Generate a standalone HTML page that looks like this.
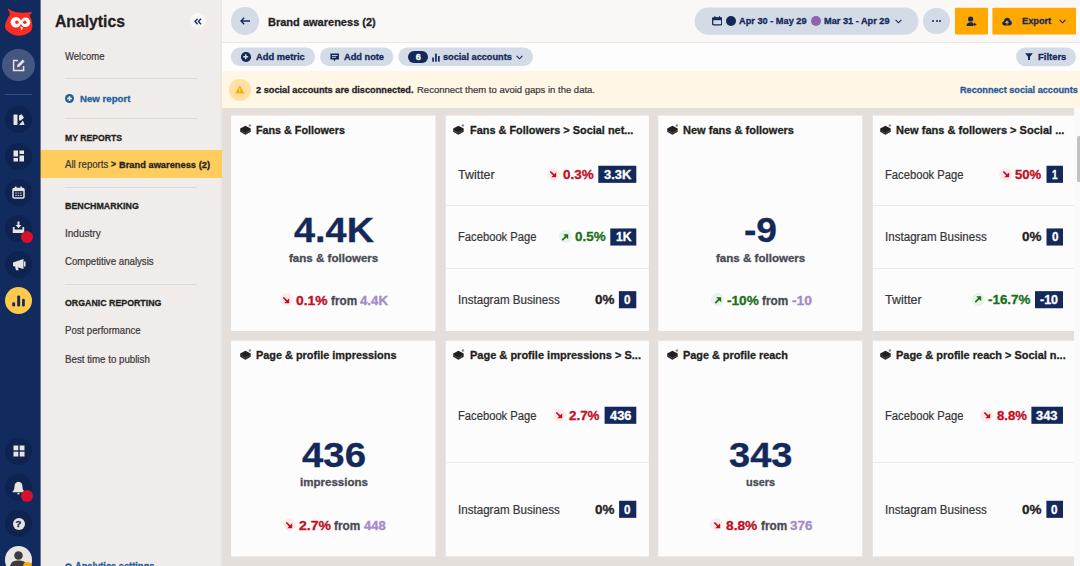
<!DOCTYPE html><html><head><meta charset="utf-8"><title>Analytics</title><style>
html,body{margin:0;padding:0}body{width:1080px;height:566px;overflow:hidden;position:relative;background:#e4dfdb;font-family:"Liberation Sans", sans-serif}
#r{position:absolute;left:0;top:0;width:1080px;height:566px;overflow:hidden}
#r div,#r svg,#r span{position:absolute;display:block}
#r span{white-space:pre;line-height:1}
</style></head><body><div id="r">
<div style="left:0.00px;top:0.00px;width:40.00px;height:566.00px;background:#112b5e;"></div>
<div style="left:40.00px;top:0.00px;width:182.00px;height:566.00px;background:#f0ece9;"></div>
<div style="left:40.00px;top:0.00px;width:1.00px;height:566.00px;background:#6a7896;"></div>
<div style="left:220.00px;top:0.00px;width:1.00px;height:566.00px;background:#eeeae7;"></div>
<div style="left:221.00px;top:0.00px;width:1.00px;height:566.00px;background:#e9e5e2;"></div>
<div style="left:222.00px;top:0.00px;width:858.00px;height:42.00px;background:#f9f8f7;"></div>
<div style="left:222.00px;top:42.00px;width:858.00px;height:1.00px;background:#ebe7e4;"></div>
<div style="left:222.00px;top:43.00px;width:858.00px;height:28.00px;background:#fdfdfd;"></div>
<div style="left:222.00px;top:71.00px;width:858.00px;height:37.00px;background:#fff6e5;"></div>
<div style="left:222.00px;top:108.00px;width:858.00px;height:458.00px;background:#e4dfdb;"></div>
<svg style="left:4.00px;top:7.00px;" width="30" height="30" viewBox="0 0 30 30"><path d="M3.5 1.2 C6 3 10 5 14.8 5.5 C18 5.8 23 5.6 28.4 4.9 C27 6.5 26 7.8 25.5 8.7 C27.5 11 28.4 16 28.4 20 C28 23 26.5 25 24.9 25.6 C22 28 18 28.8 14.8 28.8 C11 28.8 7.5 27.5 5.4 25.6 C3 24 1.2 22 1 20 C1 17 1.8 15 2.9 13 C3.8 11 5 8.8 6 7.4 C5.5 5.5 4.8 3.4 3.5 1.2 Z" fill="#fb2c23"/>
<circle cx="11.9" cy="15.3" r="5.3" fill="#fff"/><circle cx="21.5" cy="15.3" r="4.8" fill="#fff"/>
<circle cx="12.9" cy="15.3" r="1.8" fill="#fb2c23"/><circle cx="20.8" cy="15.3" r="1.8" fill="#fb2c23"/>
<path d="M16.2 19.6 L19 20.6 L17.6 23.4 Z" fill="#fff"/></svg>
<div style="left:2.25px;top:48.75px;width:32.50px;height:32.50px;background:#43577f;border-radius:50%;"></div>
<svg style="left:11.50px;top:58.00px;" width="14" height="14" viewBox="0 0 14 14"><path d="M6 2.4 H1.6 V12.4 H11.6 V8" fill="none" stroke="#e6e2df" stroke-width="1.5"/><path d="M5.4 6.8 L10.6 1.5 L12.6 3.5 L7.4 8.8 L5 9.3 Z" fill="#e6e2df"/></svg>
<div style="left:5.00px;top:94.00px;width:27.00px;height:1.00px;background:#3a4f7c;"></div>
<div style="left:5.00px;top:106.30px;width:27.00px;height:27.00px;background:#0e2350;border-radius:50%;"></div>
<div style="left:5.00px;top:142.50px;width:27.00px;height:27.00px;background:#0e2350;border-radius:50%;"></div>
<div style="left:5.00px;top:178.90px;width:27.00px;height:27.00px;background:#0e2350;border-radius:50%;"></div>
<div style="left:5.00px;top:215.00px;width:27.00px;height:27.00px;background:#0e2350;border-radius:50%;"></div>
<div style="left:5.00px;top:251.10px;width:27.00px;height:27.00px;background:#0e2350;border-radius:50%;"></div>
<div style="left:5.00px;top:287.20px;width:27.00px;height:27.00px;background:#ffc94d;border-radius:50%;"></div>
<div style="left:5.00px;top:437.50px;width:27.00px;height:27.00px;background:#0e2350;border-radius:50%;"></div>
<div style="left:5.00px;top:474.00px;width:27.00px;height:27.00px;background:#0e2350;border-radius:50%;"></div>
<div style="left:5.00px;top:510.00px;width:27.00px;height:27.00px;background:#0e2350;border-radius:50%;"></div>
<svg style="left:12.50px;top:113.80px;" width="12" height="12" viewBox="0 0 12 12"><rect x="0.5" y="0.5" width="4" height="10.5" rx="0.8" fill="#e8e4e1"/><path d="M6 1.6 L8.6 0.3 L11 3.8 L7.8 6.4 H6 Z" fill="#e8e4e1"/><path d="M6 11 L10 6.6 L11.6 11 Z" fill="#e8e4e1"/></svg>
<svg style="left:12.50px;top:150.00px;" width="12" height="12" viewBox="0 0 12 12"><rect x="0.5" y="0.5" width="4.5" height="6" fill="#e8e4e1"/><rect x="6.5" y="0.5" width="4.5" height="3.5" fill="#e8e4e1"/><rect x="0.5" y="8" width="4.5" height="3.5" fill="#e8e4e1"/><rect x="6.5" y="5.5" width="4.5" height="6" fill="#e8e4e1"/></svg>
<svg style="left:12.00px;top:186.00px;" width="13" height="13" viewBox="0 0 13 13"><rect x="1" y="2.5" width="11" height="9.5" rx="1.2" fill="none" stroke="#e8e4e1" stroke-width="1.5"/><rect x="1" y="2.5" width="11" height="2.6" fill="#e8e4e1"/><rect x="3" y="0.5" width="1.6" height="3" fill="#e8e4e1"/><rect x="8.4" y="0.5" width="1.6" height="3" fill="#e8e4e1"/><path d="M3.2 7 H4.8 M5.7 7 H7.3 M8.2 7 H9.8 M3.2 9.3 H4.8 M5.7 9.3 H7.3 M8.2 9.3 H9.8" stroke="#e8e4e1" stroke-width="1.2" opacity="0.8"/></svg>
<svg style="left:12.00px;top:221.30px;" width="13" height="13" viewBox="0 0 13 13"><path d="M5.5 0.5 H7.5 V4 H9.5 L6.5 7.2 L3.5 4 H5.5 Z" fill="#e8e4e1"/><path d="M0.8 6 H2.6 V8.6 H10.4 V6 H12.2 V12 H0.8 Z" fill="#e8e4e1"/></svg>
<div style="left:21.30px;top:231.00px;width:12.00px;height:12.00px;background:#d8102c;border-radius:50%;"></div>
<svg style="left:11.50px;top:258.00px;" width="14" height="13" viewBox="0 0 14 13"><path d="M1 4.5 L11.5 1 V11 L1 8 Z" fill="#e8e4e1"/><rect x="12" y="3.5" width="1.5" height="5" fill="#e8e4e1"/><path d="M3 8.5 L6 9.3 L6.5 12.3 H4 Z" fill="#e8e4e1"/></svg>
<svg style="left:12.00px;top:295.00px;" width="13" height="12" viewBox="0 0 13 12"><rect x="0.3" y="7.3" width="2.8" height="4.1" rx="1.2" fill="#14295a"/><rect x="5.2" y="0.4" width="2.9" height="11" rx="1.2" fill="#14295a"/><rect x="10.1" y="3.7" width="2.7" height="7.7" rx="1.2" fill="#14295a"/></svg>
<svg style="left:12.50px;top:445.00px;" width="12" height="12" viewBox="0 0 12 12"><rect x="0.5" y="0.5" width="4.8" height="4.8" fill="#e8e4e1"/><rect x="6.7" y="0.5" width="4.8" height="4.8" fill="#e8e4e1"/><rect x="0.5" y="6.7" width="4.8" height="4.8" fill="#e8e4e1"/><rect x="6.7" y="6.7" width="4.8" height="4.8" fill="#e8e4e1"/></svg>
<svg style="left:12.00px;top:480.50px;" width="13" height="14" viewBox="0 0 13 14"><path d="M6.5 0.8 C9.3 0.8 10.5 3 10.5 5.5 C10.5 8.5 11.5 9.5 12.3 10.3 V11.2 H0.7 V10.3 C1.5 9.5 2.5 8.5 2.5 5.5 C2.5 3 3.7 0.8 6.5 0.8 Z" fill="#e8e4e1"/><rect x="5.5" y="11.8" width="2" height="1.6" fill="#e8e4e1"/></svg>
<div style="left:21.20px;top:490.00px;width:12.00px;height:12.00px;background:#d8102c;border-radius:50%;"></div>
<div style="left:12.50px;top:517.50px;width:12.00px;height:12.00px;background:#e8e4e1;border-radius:50%;"></div>
<div style="left:4.75px;top:546.25px;width:27.50px;height:27.50px;background:#e9e6e3;border-radius:50%;"></div>
<svg style="left:9.00px;top:549.00px;" width="19" height="19" viewBox="0 0 19 19"><circle cx="9.5" cy="6.5" r="4.3" fill="#3c3c3c"/><path d="M1 19 C1 13 5 11.5 9.5 11.5 C14 11.5 18 13 18 19 Z" fill="#3c3c3c"/></svg>
<div style="left:22.90px;top:561.50px;width:9.00px;height:9.00px;background:#ffa800;border-radius:50%;"></div>
<div style="left:190.20px;top:13.00px;width:16.00px;height:16.00px;background:#f8f7f6;border-radius:50%;"></div>
<svg style="left:194.30px;top:17.70px;" width="8" height="7" viewBox="0 0 8 7"><path d="M3.6 0.8 L1 3.5 L3.6 6.2 M7 0.8 L4.4 3.5 L7 6.2" fill="none" stroke="#14295a" stroke-width="1.3"/></svg>
<div style="left:65.00px;top:78.20px;width:132.00px;height:1.00px;background:#dedad6;"></div>
<div style="left:65.00px;top:117.70px;width:132.00px;height:1.00px;background:#dedad6;"></div>
<div style="left:65.00px;top:186.60px;width:132.00px;height:1.00px;background:#dedad6;"></div>
<div style="left:65.00px;top:283.80px;width:132.00px;height:1.00px;background:#dedad6;"></div>
<div style="left:64.70px;top:93.50px;width:9.60px;height:9.60px;background:#1f5f9e;border-radius:50%;"></div>
<svg style="left:65.00px;top:93.80px;" width="9" height="9" viewBox="0 0 9 9"><path d="M4.5 2 V7 M2 4.5 H7" stroke="#f0ece9" stroke-width="1.5"/></svg>
<div style="left:41.00px;top:150.40px;width:181.00px;height:27.90px;background:#ffcd5d;"></div>
<div style="left:40.00px;top:150.40px;width:1.00px;height:27.90px;background:#70784f;"></div>
<svg style="left:64.50px;top:562.50px;" width="7" height="7" viewBox="0 0 7 7"><circle cx="3.5" cy="3.5" r="2.4" fill="none" stroke="#1f5f9e" stroke-width="1.8"/></svg>
<div style="left:231.05px;top:7.25px;width:27.50px;height:27.50px;background:#d4dbe6;border-radius:50%;"></div>
<svg style="left:239.50px;top:17.00px;" width="11" height="8" viewBox="0 0 11 8"><path d="M4.2 0.8 L1 4 L4.2 7.2 M1.2 4 H10" fill="none" stroke="#14295a" stroke-width="1.3"/></svg>
<svg style="left:693.00px;top:6.00px;" width="227" height="31" viewBox="0 0 227 31"><rect x="1.60" y="1.40" width="223.90" height="27.40" fill="#d3dbe6" rx="13.7"/></svg>
<svg style="left:711.80px;top:16.40px;" width="10.5" height="9.6" viewBox="0 0 10.5 9.6"><rect x="0.7" y="1.8" width="9" height="7" rx="0.8" fill="none" stroke="#14295a" stroke-width="1.3"/><rect x="0.7" y="1.8" width="9" height="2.4" fill="#14295a"/><rect x="2.3" y="0.2" width="1.3" height="2.4" fill="#14295a"/><rect x="6.8" y="0.2" width="1.3" height="2.4" fill="#14295a"/></svg>
<div style="left:726.30px;top:16.20px;width:10.00px;height:10.00px;background:#14295a;border-radius:50%;"></div>
<div style="left:811.20px;top:16.20px;width:10.00px;height:10.00px;background:#8f63ad;border-radius:50%;"></div>
<svg style="left:895.40px;top:18.50px;" width="7" height="5" viewBox="0 0 7 5"><path d="M0.6 0.8 L3.5 3.8 L6.4 0.8" fill="none" stroke="#14295a" stroke-width="1.1"/></svg>
<div style="left:923.45px;top:7.75px;width:26.50px;height:26.50px;background:#d3dbe6;border-radius:50%;"></div>
<div style="left:932.35px;top:20.25px;width:2.10px;height:2.10px;background:#14295a;border-radius:50%;"></div>
<div style="left:935.65px;top:20.25px;width:2.10px;height:2.10px;background:#14295a;border-radius:50%;"></div>
<div style="left:938.95px;top:20.25px;width:2.10px;height:2.10px;background:#14295a;border-radius:50%;"></div>
<svg style="left:954.00px;top:6.00px;" width="36" height="30" viewBox="0 0 36 30"><rect x="1.00" y="1.70" width="33.00" height="26.80" fill="#ffa800" rx="1.2"/></svg>
<svg style="left:966.00px;top:15.50px;" width="11" height="11" viewBox="0 0 11 11"><circle cx="4.6" cy="3" r="2.6" fill="#14295a"/><path d="M0.5 10 C0.6 7.6 2 6.3 4.6 6.3 C6 6.3 6.9 6.6 7.4 7.2 V10 Z" fill="#14295a"/><path d="M8.8 6.8 V10 M7.2 8.4 H10.4" stroke="#14295a" stroke-width="1"/></svg>
<svg style="left:991.00px;top:6.00px;" width="87" height="30" viewBox="0 0 87 30"><rect x="1.40" y="1.70" width="83.60" height="26.80" fill="#ffa800" rx="1.2"/></svg>
<svg style="left:1002.30px;top:16.50px;" width="10" height="9" viewBox="0 0 10 9"><path d="M2.5 8.5 C1 8.5 0.2 7.4 0.2 6.3 C0.2 5.2 1 4.3 2 4.2 C2.2 2.2 3.5 0.8 5.2 0.8 C6.8 0.8 8 2 8.2 3.6 C9.2 3.8 9.9 4.8 9.9 6 C9.9 7.4 8.9 8.5 7.6 8.5 Z" fill="#14295a"/><path d="M5 7.6 V4.4 M3.4 5.8 L5 4.2 L6.6 5.8" fill="none" stroke="#ffa800" stroke-width="1.1"/></svg>
<svg style="left:1059.00px;top:18.50px;" width="7" height="5" viewBox="0 0 7 5"><path d="M0.6 0.8 L3.5 3.8 L6.4 0.8" fill="none" stroke="#14295a" stroke-width="1.1"/></svg>
<svg style="left:229.00px;top:46.00px;" width="88" height="22" viewBox="0 0 88 22"><rect x="1.80" y="1.60" width="84.20" height="18.30" fill="#d3dbe6" rx="9.15"/></svg>
<div style="left:241.30px;top:52.30px;width:9.40px;height:9.40px;background:#14295a;border-radius:50%;"></div>
<svg style="left:241.30px;top:52.30px;" width="9.4" height="9.4" viewBox="0 0 9.4 9.4"><path d="M4.7 2.2 V7.2 M2.2 4.7 H7.2" stroke="#d3dbe6" stroke-width="1.5"/></svg>
<svg style="left:319.00px;top:46.00px;" width="77" height="22" viewBox="0 0 77 22"><rect x="1.00" y="1.60" width="73.30" height="18.30" fill="#d3dbe6" rx="9.15"/></svg>
<svg style="left:329.60px;top:52.60px;" width="9.6" height="9.4" viewBox="0 0 9.6 9.4"><path d="M0.4 0.4 H9.2 V6.6 H5.6 L4.2 8.6 L3.6 6.6 H0.4 Z" fill="#14295a"/><path d="M2 2.5 H7.6 M2 4.3 H6" stroke="#d3dbe6" stroke-width="0.9"/></svg>
<svg style="left:397.00px;top:46.00px;" width="138" height="22" viewBox="0 0 138 22"><rect x="1.30" y="1.60" width="134.70" height="18.30" fill="#d3dbe6" rx="9.15"/></svg>
<div style="left:408.30px;top:51.30px;width:19.70px;height:11.70px;background:#14295a;border-radius:5.9px;"></div>
<svg style="left:431.60px;top:52.50px;" width="8" height="9" viewBox="0 0 8 9"><rect x="0.2" y="4.5" width="1.7" height="4.2" fill="#14295a"/><rect x="3.1" y="0.6" width="1.7" height="8.1" fill="#14295a"/><rect x="6" y="3" width="1.7" height="5.7" fill="#14295a"/></svg>
<svg style="left:516.40px;top:54.60px;" width="7" height="5" viewBox="0 0 7 5"><path d="M0.6 0.8 L3.5 3.8 L6.4 0.8" fill="none" stroke="#14295a" stroke-width="1.1"/></svg>
<svg style="left:1015.00px;top:46.00px;" width="63" height="22" viewBox="0 0 63 22"><rect x="1.10" y="1.40" width="59.90" height="18.80" fill="#d3dbe6" rx="9.4"/></svg>
<svg style="left:1024.60px;top:53.40px;" width="8" height="7.4" viewBox="0 0 8 7.4"><path d="M0.1 0.3 H7.9 L5 3.7 V7 H3 V3.7 Z" fill="#14295a"/></svg>
<div style="left:229.00px;top:79.00px;width:22.00px;height:22.00px;background:#ffe0a0;border-radius:50%;"></div>
<svg style="left:235.20px;top:85.00px;" width="9.6" height="8.8" viewBox="0 0 9.6 8.8"><path d="M4.8 0.4 L9.4 8.6 H0.2 Z" fill="#ffa800"/><path d="M4.8 3.4 V6 M4.8 6.8 V7.6" stroke="#ffe9bd" stroke-width="0.9"/></svg>
<svg style="left:230.00px;top:114.00px;" width="208" height="219" viewBox="0 0 208 219"><rect x="1.10" y="1.60" width="204.30" height="215.40" fill="#fcfcfc"/></svg>
<svg style="left:239.50px;top:124.00px;" width="12.5" height="11" viewBox="0 0 12.5 11"><path d="M0.2 4.6 L5.4 1.7 L10.7 4.6 V7.8 L5.4 10.8 L0.2 7.8 Z" fill="#231f20"/><path d="M0.6 6.4 L5.4 9 L10.3 6.4" fill="none" stroke="#77757a" stroke-width="0.5"/><path d="M0.6 7.7 L5.4 10.3 L10.3 7.7" fill="none" stroke="#55535a" stroke-width="0.4"/><circle cx="9.9" cy="1.5" r="1.2" fill="#8a888c"/></svg>
<div style="left:279.95px;top:293.30px;width:13.00px;height:13.00px;background:#fdeaed;border-radius:50%;"></div>
<svg style="left:282.25px;top:295.60px;" width="8.4" height="8.4" viewBox="0 0 8.4 8.4"><path d="M1.3 1.5 L6 6.2" stroke="#c20e1f" stroke-width="1.7"/><path d="M7.2 2.2 V7.2 H2.2 Z" fill="#c20e1f"/></svg>
<svg style="left:444.00px;top:114.00px;" width="207" height="219" viewBox="0 0 207 219"><rect x="1.70" y="1.60" width="203.20" height="215.40" fill="#fcfcfc"/></svg>
<svg style="left:453.30px;top:124.00px;" width="12.5" height="11" viewBox="0 0 12.5 11"><path d="M0.2 4.6 L5.4 1.7 L10.7 4.6 V7.8 L5.4 10.8 L0.2 7.8 Z" fill="#231f20"/><path d="M0.6 6.4 L5.4 9 L10.3 6.4" fill="none" stroke="#77757a" stroke-width="0.5"/><path d="M0.6 7.7 L5.4 10.3 L10.3 7.7" fill="none" stroke="#55535a" stroke-width="0.4"/><circle cx="9.9" cy="1.5" r="1.2" fill="#8a888c"/></svg>
<svg style="left:597.00px;top:164.00px;" width="41" height="21" viewBox="0 0 41 21"><rect x="1.30" y="1.75" width="38.00" height="17.10" fill="#14295a"/></svg>
<div style="left:546.70px;top:167.75px;width:13.00px;height:13.00px;background:#fdeaed;border-radius:50%;"></div>
<svg style="left:549.00px;top:170.05px;" width="8.4" height="8.4" viewBox="0 0 8.4 8.4"><path d="M1.3 1.5 L6 6.2" stroke="#c20e1f" stroke-width="1.7"/><path d="M7.2 2.2 V7.2 H2.2 Z" fill="#c20e1f"/></svg>
<div style="left:445.70px;top:205.30px;width:203.20px;height:1.00px;background:#eeeae7;"></div>
<svg style="left:609.00px;top:227.00px;" width="29" height="21" viewBox="0 0 29 21"><rect x="1.30" y="1.45" width="26.00" height="17.10" fill="#14295a"/></svg>
<div style="left:558.70px;top:230.45px;width:13.00px;height:13.00px;background:#e8f3ea;border-radius:50%;"></div>
<svg style="left:561.00px;top:232.75px;" width="8.4" height="8.4" viewBox="0 0 8.4 8.4"><path d="M1.3 7.1 L6 2.4" stroke="#1c701c" stroke-width="1.7"/><path d="M2.2 1.2 H7.2 V6.2 Z" fill="#1c701c"/></svg>
<div style="left:445.70px;top:268.00px;width:203.20px;height:1.00px;background:#eeeae7;"></div>
<svg style="left:617.00px;top:290.00px;" width="21" height="21" viewBox="0 0 21 21"><rect x="1.90" y="1.15" width="17.40" height="17.10" fill="#14295a"/></svg>
<svg style="left:657.00px;top:114.00px;" width="207" height="219" viewBox="0 0 207 219"><rect x="1.30" y="1.60" width="203.90" height="215.40" fill="#fcfcfc"/></svg>
<svg style="left:666.90px;top:124.00px;" width="12.5" height="11" viewBox="0 0 12.5 11"><path d="M0.2 4.6 L5.4 1.7 L10.7 4.6 V7.8 L5.4 10.8 L0.2 7.8 Z" fill="#231f20"/><path d="M0.6 6.4 L5.4 9 L10.3 6.4" fill="none" stroke="#77757a" stroke-width="0.5"/><path d="M0.6 7.7 L5.4 10.3 L10.3 7.7" fill="none" stroke="#55535a" stroke-width="0.4"/><circle cx="9.9" cy="1.5" r="1.2" fill="#8a888c"/></svg>
<div style="left:711.20px;top:293.30px;width:13.00px;height:13.00px;background:#e8f3ea;border-radius:50%;"></div>
<svg style="left:713.50px;top:295.60px;" width="8.4" height="8.4" viewBox="0 0 8.4 8.4"><path d="M1.3 7.1 L6 2.4" stroke="#1c701c" stroke-width="1.7"/><path d="M2.2 1.2 H7.2 V6.2 Z" fill="#1c701c"/></svg>
<svg style="left:871.00px;top:114.00px;" width="209" height="219" viewBox="0 0 209 219"><rect x="1.80" y="1.60" width="205.20" height="215.40" fill="#fcfcfc"/></svg>
<svg style="left:880.00px;top:124.00px;" width="12.5" height="11" viewBox="0 0 12.5 11"><path d="M0.2 4.6 L5.4 1.7 L10.7 4.6 V7.8 L5.4 10.8 L0.2 7.8 Z" fill="#231f20"/><path d="M0.6 6.4 L5.4 9 L10.3 6.4" fill="none" stroke="#77757a" stroke-width="0.5"/><path d="M0.6 7.7 L5.4 10.3 L10.3 7.7" fill="none" stroke="#55535a" stroke-width="0.4"/><circle cx="9.9" cy="1.5" r="1.2" fill="#8a888c"/></svg>
<svg style="left:1045.00px;top:164.00px;" width="20" height="21" viewBox="0 0 20 21"><rect x="1.50" y="1.75" width="16.50" height="17.10" fill="#14295a"/></svg>
<div style="left:999.20px;top:167.75px;width:13.00px;height:13.00px;background:#fdeaed;border-radius:50%;"></div>
<svg style="left:1001.50px;top:170.05px;" width="8.4" height="8.4" viewBox="0 0 8.4 8.4"><path d="M1.3 1.5 L6 6.2" stroke="#c20e1f" stroke-width="1.7"/><path d="M7.2 2.2 V7.2 H2.2 Z" fill="#c20e1f"/></svg>
<div style="left:872.80px;top:205.30px;width:205.20px;height:1.00px;background:#eeeae7;"></div>
<svg style="left:1045.00px;top:227.00px;" width="20" height="21" viewBox="0 0 20 21"><rect x="1.50" y="1.45" width="16.50" height="17.10" fill="#14295a"/></svg>
<div style="left:872.80px;top:268.00px;width:205.20px;height:1.00px;background:#eeeae7;"></div>
<svg style="left:1034.00px;top:290.00px;" width="31" height="21" viewBox="0 0 31 21"><rect x="1.00" y="1.15" width="28.00" height="17.10" fill="#14295a"/></svg>
<div style="left:971.60px;top:293.15px;width:13.00px;height:13.00px;background:#e8f3ea;border-radius:50%;"></div>
<svg style="left:973.90px;top:295.45px;" width="8.4" height="8.4" viewBox="0 0 8.4 8.4"><path d="M1.3 7.1 L6 2.4" stroke="#1c701c" stroke-width="1.7"/><path d="M2.2 1.2 H7.2 V6.2 Z" fill="#1c701c"/></svg>
<svg style="left:230.00px;top:339.00px;" width="208" height="219" viewBox="0 0 208 219"><rect x="1.10" y="1.80" width="204.30" height="215.60" fill="#fcfcfc"/></svg>
<svg style="left:239.50px;top:349.30px;" width="12.5" height="11" viewBox="0 0 12.5 11"><path d="M0.2 4.6 L5.4 1.7 L10.7 4.6 V7.8 L5.4 10.8 L0.2 7.8 Z" fill="#231f20"/><path d="M0.6 6.4 L5.4 9 L10.3 6.4" fill="none" stroke="#77757a" stroke-width="0.5"/><path d="M0.6 7.7 L5.4 10.3 L10.3 7.7" fill="none" stroke="#55535a" stroke-width="0.4"/><circle cx="9.9" cy="1.5" r="1.2" fill="#8a888c"/></svg>
<div style="left:282.85px;top:518.30px;width:13.00px;height:13.00px;background:#fdeaed;border-radius:50%;"></div>
<svg style="left:285.15px;top:520.60px;" width="8.4" height="8.4" viewBox="0 0 8.4 8.4"><path d="M1.3 1.5 L6 6.2" stroke="#c20e1f" stroke-width="1.7"/><path d="M7.2 2.2 V7.2 H2.2 Z" fill="#c20e1f"/></svg>
<svg style="left:444.00px;top:339.00px;" width="207" height="219" viewBox="0 0 207 219"><rect x="1.70" y="1.80" width="203.20" height="215.60" fill="#fcfcfc"/></svg>
<svg style="left:453.30px;top:349.30px;" width="12.5" height="11" viewBox="0 0 12.5 11"><path d="M0.2 4.6 L5.4 1.7 L10.7 4.6 V7.8 L5.4 10.8 L0.2 7.8 Z" fill="#231f20"/><path d="M0.6 6.4 L5.4 9 L10.3 6.4" fill="none" stroke="#77757a" stroke-width="0.5"/><path d="M0.6 7.7 L5.4 10.3 L10.3 7.7" fill="none" stroke="#55535a" stroke-width="0.4"/><circle cx="9.9" cy="1.5" r="1.2" fill="#8a888c"/></svg>
<svg style="left:603.00px;top:405.00px;" width="35" height="21" viewBox="0 0 35 21"><rect x="1.60" y="1.72" width="31.70" height="17.10" fill="#14295a"/></svg>
<div style="left:553.10px;top:408.72px;width:13.00px;height:13.00px;background:#fdeaed;border-radius:50%;"></div>
<svg style="left:555.40px;top:411.02px;" width="8.4" height="8.4" viewBox="0 0 8.4 8.4"><path d="M1.3 1.5 L6 6.2" stroke="#c20e1f" stroke-width="1.7"/><path d="M7.2 2.2 V7.2 H2.2 Z" fill="#c20e1f"/></svg>
<div style="left:445.70px;top:461.95px;width:203.20px;height:1.00px;background:#eeeae7;"></div>
<svg style="left:618.00px;top:499.00px;" width="21" height="21" viewBox="0 0 21 21"><rect x="1.10" y="1.77" width="17.20" height="17.10" fill="#14295a"/></svg>
<svg style="left:657.00px;top:339.00px;" width="207" height="219" viewBox="0 0 207 219"><rect x="1.30" y="1.80" width="203.90" height="215.60" fill="#fcfcfc"/></svg>
<svg style="left:666.90px;top:349.30px;" width="12.5" height="11" viewBox="0 0 12.5 11"><path d="M0.2 4.6 L5.4 1.7 L10.7 4.6 V7.8 L5.4 10.8 L0.2 7.8 Z" fill="#231f20"/><path d="M0.6 6.4 L5.4 9 L10.3 6.4" fill="none" stroke="#77757a" stroke-width="0.5"/><path d="M0.6 7.7 L5.4 10.3 L10.3 7.7" fill="none" stroke="#55535a" stroke-width="0.4"/><circle cx="9.9" cy="1.5" r="1.2" fill="#8a888c"/></svg>
<div style="left:710.20px;top:518.30px;width:13.00px;height:13.00px;background:#fdeaed;border-radius:50%;"></div>
<svg style="left:712.50px;top:520.60px;" width="8.4" height="8.4" viewBox="0 0 8.4 8.4"><path d="M1.3 1.5 L6 6.2" stroke="#c20e1f" stroke-width="1.7"/><path d="M7.2 2.2 V7.2 H2.2 Z" fill="#c20e1f"/></svg>
<svg style="left:871.00px;top:339.00px;" width="209" height="219" viewBox="0 0 209 219"><rect x="1.80" y="1.80" width="205.20" height="215.60" fill="#fcfcfc"/></svg>
<svg style="left:880.00px;top:349.30px;" width="12.5" height="11" viewBox="0 0 12.5 11"><path d="M0.2 4.6 L5.4 1.7 L10.7 4.6 V7.8 L5.4 10.8 L0.2 7.8 Z" fill="#231f20"/><path d="M0.6 6.4 L5.4 9 L10.3 6.4" fill="none" stroke="#77757a" stroke-width="0.5"/><path d="M0.6 7.7 L5.4 10.3 L10.3 7.7" fill="none" stroke="#55535a" stroke-width="0.4"/><circle cx="9.9" cy="1.5" r="1.2" fill="#8a888c"/></svg>
<svg style="left:1030.00px;top:405.00px;" width="35" height="21" viewBox="0 0 35 21"><rect x="1.40" y="1.72" width="31.60" height="17.10" fill="#14295a"/></svg>
<div style="left:980.40px;top:408.72px;width:13.00px;height:13.00px;background:#fdeaed;border-radius:50%;"></div>
<svg style="left:982.70px;top:411.02px;" width="8.4" height="8.4" viewBox="0 0 8.4 8.4"><path d="M1.3 1.5 L6 6.2" stroke="#c20e1f" stroke-width="1.7"/><path d="M7.2 2.2 V7.2 H2.2 Z" fill="#c20e1f"/></svg>
<div style="left:872.80px;top:461.95px;width:205.20px;height:1.00px;background:#eeeae7;"></div>
<svg style="left:1045.00px;top:499.00px;" width="20" height="21" viewBox="0 0 20 21"><rect x="1.40" y="1.77" width="16.60" height="17.10" fill="#14295a"/></svg>
<div style="left:1074.00px;top:108.00px;width:6.00px;height:458.00px;background:#fafafa;"></div>
<div style="left:1076.80px;top:136.30px;width:3.20px;height:45.50px;background:#c1c1c1;border-radius:1.6px 0 0 1.6px;"></div>
<span id="t0" style="left:15.59px;top:519.00px;font-size:9.5px;font-weight:700;color:#0e2350;-webkit-text-stroke:0.3px;">?</span>
<span id="t1" style="left:55.00px;top:14.00px;font-size:16.8px;font-weight:700;color:#1f1f25;transform:scaleX(0.9380);transform-origin:0 0;-webkit-text-stroke:0.3px;">Analytics</span>
<span id="t2" style="left:64.60px;top:52.00px;font-size:10.4px;font-weight:400;color:#373538;transform:scaleX(0.9159);transform-origin:0 0;-webkit-text-stroke:0.2px;">Welcome</span>
<span id="t3" style="left:79.60px;top:94.00px;font-size:9.5px;font-weight:700;color:#1f5f9e;transform:scaleX(1.0176);transform-origin:0 0;-webkit-text-stroke:0.3px;">New report</span>
<span id="t4" style="left:65.00px;top:133.00px;font-size:9.4px;font-weight:700;color:#231f20;transform:scaleX(0.9219);transform-origin:0 0;-webkit-text-stroke:0.3px;">MY REPORTS</span>
<span id="t5" style="left:64.80px;top:160.00px;font-size:10px;font-weight:400;color:#373538;transform:scaleX(0.9619);transform-origin:0 0;-webkit-text-stroke:0.2px;">All reports</span>
<span id="t6" style="left:110.90px;top:160.00px;font-size:9px;font-weight:700;color:#231f20;transform:scaleX(0.9496);transform-origin:0 0;-webkit-text-stroke:0.3px;">&gt;</span>
<span id="t7" style="left:119.20px;top:160.00px;font-size:9.7px;font-weight:700;color:#231f20;transform:scaleX(0.9603);transform-origin:0 0;-webkit-text-stroke:0.3px;">Brand awareness (2)</span>
<span id="t8" style="left:65.00px;top:201.00px;font-size:9.4px;font-weight:700;color:#231f20;transform:scaleX(0.9446);transform-origin:0 0;-webkit-text-stroke:0.3px;">BENCHMARKING</span>
<span id="t9" style="left:65.00px;top:229.00px;font-size:10.2px;font-weight:400;color:#373538;transform:scaleX(0.9848);transform-origin:0 0;-webkit-text-stroke:0.2px;">Industry</span>
<span id="t10" style="left:65.00px;top:257.00px;font-size:10.2px;font-weight:400;color:#373538;transform:scaleX(0.9493);transform-origin:0 0;-webkit-text-stroke:0.2px;">Competitive analysis</span>
<span id="t11" style="left:65.00px;top:298.00px;font-size:9.4px;font-weight:700;color:#231f20;transform:scaleX(0.9395);transform-origin:0 0;-webkit-text-stroke:0.3px;">ORGANIC REPORTING</span>
<span id="t12" style="left:65.00px;top:326.00px;font-size:10.2px;font-weight:400;color:#373538;transform:scaleX(0.9402);transform-origin:0 0;-webkit-text-stroke:0.2px;">Post performance</span>
<span id="t13" style="left:65.00px;top:355.00px;font-size:10.2px;font-weight:400;color:#373538;transform:scaleX(0.9538);transform-origin:0 0;-webkit-text-stroke:0.2px;">Best time to publish</span>
<span id="t14" style="left:74.50px;top:562.00px;font-size:10px;font-weight:700;color:#1f5f9e;transform:scaleX(0.9265);transform-origin:0 0;-webkit-text-stroke:0.3px;">Analytics settings</span>
<span id="t15" style="left:268.00px;top:16.00px;font-size:11.6px;font-weight:700;color:#1f1f25;transform:scaleX(0.9504);transform-origin:0 0;-webkit-text-stroke:0.3px;">Brand awareness (2)</span>
<span id="t16" style="left:738.50px;top:16.00px;font-size:9.6px;font-weight:700;color:#14295a;transform:scaleX(0.9604);transform-origin:0 0;-webkit-text-stroke:0.3px;">Apr 30 - May 29</span>
<span id="t17" style="left:823.70px;top:16.00px;font-size:9.6px;font-weight:700;color:#14295a;transform:scaleX(0.9585);transform-origin:0 0;-webkit-text-stroke:0.3px;">Mar 31 - Apr 29</span>
<span id="t18" style="left:1022.20px;top:16.00px;font-size:9.6px;font-weight:700;color:#14295a;transform:scaleX(0.9608);transform-origin:0 0;-webkit-text-stroke:0.3px;">Export</span>
<span id="t19" style="left:256.30px;top:52.00px;font-size:9.6px;font-weight:700;color:#14295a;transform:scaleX(0.9716);transform-origin:0 0;-webkit-text-stroke:0.3px;">Add metric</span>
<span id="t20" style="left:344.20px;top:52.00px;font-size:9.6px;font-weight:700;color:#14295a;transform:scaleX(0.9620);transform-origin:0 0;-webkit-text-stroke:0.3px;">Add note</span>
<span id="t21" style="left:415.64px;top:53.00px;font-size:9.2px;font-weight:700;color:#ffffff;-webkit-text-stroke:0.3px;">6</span>
<span id="t22" style="left:442.50px;top:52.00px;font-size:9.6px;font-weight:700;color:#14295a;transform:scaleX(0.9558);transform-origin:0 0;-webkit-text-stroke:0.3px;">social accounts</span>
<span id="t23" style="left:1037.80px;top:52.00px;font-size:9.6px;font-weight:700;color:#14295a;transform:scaleX(0.9827);transform-origin:0 0;-webkit-text-stroke:0.3px;">Filters</span>
<span id="t24" style="left:255.80px;top:85.00px;font-size:9.8px;font-weight:700;color:#1f1f25;transform:scaleX(0.9392);transform-origin:0 0;-webkit-text-stroke:0.3px;">2 social accounts are disconnected.</span>
<span id="t25" style="left:416.70px;top:85.00px;font-size:9.8px;font-weight:400;color:#373538;transform:scaleX(0.9698);transform-origin:0 0;-webkit-text-stroke:0.2px;">Reconnect them to avoid gaps in the data.</span>
<span id="t26" style="left:960.20px;top:85.00px;font-size:9.6px;font-weight:700;color:#1e5a9c;transform:scaleX(0.9523);transform-origin:0 0;-webkit-text-stroke:0.3px;">Reconnect social accounts</span>
<span id="t27" style="left:255.70px;top:125.00px;font-size:11.2px;font-weight:700;color:#231f20;transform:scaleX(0.9609);transform-origin:0 0;-webkit-text-stroke:0.3px;">Fans &amp; Followers</span>
<span id="t28" style="left:293.50px;top:212.00px;font-size:35px;font-weight:700;color:#14295a;transform:scaleX(1.0820);transform-origin:0 0;-webkit-text-stroke:0.3px;">4.4K</span>
<span id="t29" style="left:288.85px;top:253.00px;font-size:11.4px;font-weight:700;color:#4a4a54;transform:scaleX(1.0150);transform-origin:0 0;-webkit-text-stroke:0.3px;">fans &amp; followers</span>
<span id="t30" style="left:296.15px;top:295.00px;font-size:12.4px;font-weight:700;color:#c20e1f;transform:scaleX(1.1150);transform-origin:0 0;-webkit-text-stroke:0.3px;">0.1%</span>
<span id="t31" style="left:330.65px;top:295.00px;font-size:12px;font-weight:700;color:#4a4a54;transform:scaleX(0.9823);transform-origin:0 0;-webkit-text-stroke:0.3px;">from</span>
<span id="t32" style="left:360.25px;top:295.00px;font-size:12px;font-weight:700;color:#a48bc8;transform:scaleX(1.1041);transform-origin:0 0;-webkit-text-stroke:0.3px;">4.4K</span>
<span id="t33" style="left:469.60px;top:125.00px;font-size:11.2px;font-weight:700;color:#231f20;transform:scaleX(0.9752);transform-origin:0 0;-webkit-text-stroke:0.3px;">Fans &amp; Followers &gt; Social net...</span>
<span id="t34" style="left:458.00px;top:169.00px;font-size:12px;font-weight:400;color:#373538;transform:scaleX(1.0384);transform-origin:0 0;-webkit-text-stroke:0.2px;">Twitter</span>
<span id="t35" style="left:603.60px;top:169.00px;font-size:12px;font-weight:700;color:#ffffff;transform:scaleX(1.0805);transform-origin:0 0;-webkit-text-stroke:0.3px;">3.3K</span>
<span id="t36" style="left:562.90px;top:169.00px;font-size:12.4px;font-weight:700;color:#c20e1f;transform:scaleX(1.0832);transform-origin:0 0;-webkit-text-stroke:0.3px;">0.3%</span>
<span id="t37" style="left:458.00px;top:231.00px;font-size:12px;font-weight:400;color:#373538;transform:scaleX(0.9338);transform-origin:0 0;-webkit-text-stroke:0.2px;">Facebook Page</span>
<span id="t38" style="left:615.55px;top:231.00px;font-size:12px;font-weight:700;color:#ffffff;transform:scaleX(1.0102);transform-origin:0 0;-webkit-text-stroke:0.3px;">1K</span>
<span id="t39" style="left:574.90px;top:231.00px;font-size:12.4px;font-weight:700;color:#1c701c;transform:scaleX(1.0832);transform-origin:0 0;-webkit-text-stroke:0.3px;">0.5%</span>
<span id="t40" style="left:458.00px;top:294.00px;font-size:12px;font-weight:400;color:#373538;transform:scaleX(0.9659);transform-origin:0 0;-webkit-text-stroke:0.2px;">Instagram Business</span>
<span id="t41" style="left:624.35px;top:294.00px;font-size:12px;font-weight:700;color:#ffffff;transform:scaleX(0.9720);transform-origin:0 0;-webkit-text-stroke:0.3px;">0</span>
<span id="t42" style="left:594.60px;top:294.00px;font-size:12.4px;font-weight:700;color:#1f1f25;transform:scaleX(1.0881);transform-origin:0 0;-webkit-text-stroke:0.3px;">0%</span>
<span id="t43" style="left:683.10px;top:125.00px;font-size:11.2px;font-weight:700;color:#231f20;transform:scaleX(0.9864);transform-origin:0 0;-webkit-text-stroke:0.3px;">New fans &amp; followers</span>
<span id="t44" style="left:744.40px;top:212.00px;font-size:35px;font-weight:700;color:#14295a;transform:scaleX(1.0602);transform-origin:0 0;-webkit-text-stroke:0.3px;">-9</span>
<span id="t45" style="left:716.25px;top:253.00px;font-size:11.4px;font-weight:700;color:#4a4a54;transform:scaleX(1.0150);transform-origin:0 0;-webkit-text-stroke:0.3px;">fans &amp; followers</span>
<span id="t46" style="left:727.40px;top:295.00px;font-size:12.4px;font-weight:700;color:#1c701c;transform:scaleX(1.0989);transform-origin:0 0;-webkit-text-stroke:0.3px;">-10%</span>
<span id="t47" style="left:762.20px;top:295.00px;font-size:12px;font-weight:700;color:#4a4a54;transform:scaleX(0.9823);transform-origin:0 0;-webkit-text-stroke:0.3px;">from</span>
<span id="t48" style="left:791.80px;top:295.00px;font-size:12px;font-weight:700;color:#a48bc8;transform:scaleX(1.1532);transform-origin:0 0;-webkit-text-stroke:0.3px;">-10</span>
<span id="t49" style="left:896.30px;top:125.00px;font-size:11.2px;font-weight:700;color:#231f20;transform:scaleX(0.9867);transform-origin:0 0;-webkit-text-stroke:0.3px;">New fans &amp; followers &gt; Social ...</span>
<span id="t50" style="left:884.70px;top:169.00px;font-size:12px;font-weight:400;color:#373538;transform:scaleX(0.9338);transform-origin:0 0;-webkit-text-stroke:0.2px;">Facebook Page</span>
<span id="t51" style="left:1052.00px;top:169.00px;font-size:12px;font-weight:700;color:#ffffff;transform:scaleX(0.8224);transform-origin:0 0;-webkit-text-stroke:0.3px;">1</span>
<span id="t52" style="left:1015.40px;top:169.00px;font-size:12.4px;font-weight:700;color:#c20e1f;transform:scaleX(1.0599);transform-origin:0 0;-webkit-text-stroke:0.3px;">50%</span>
<span id="t53" style="left:884.70px;top:231.00px;font-size:12px;font-weight:400;color:#373538;transform:scaleX(0.9659);transform-origin:0 0;-webkit-text-stroke:0.2px;">Instagram Business</span>
<span id="t54" style="left:1051.50px;top:231.00px;font-size:12px;font-weight:700;color:#ffffff;transform:scaleX(0.9720);transform-origin:0 0;-webkit-text-stroke:0.3px;">0</span>
<span id="t55" style="left:1022.20px;top:231.00px;font-size:12.4px;font-weight:700;color:#1f1f25;transform:scaleX(1.0881);transform-origin:0 0;-webkit-text-stroke:0.3px;">0%</span>
<span id="t56" style="left:884.70px;top:294.00px;font-size:12px;font-weight:400;color:#373538;transform:scaleX(1.0384);transform-origin:0 0;-webkit-text-stroke:0.2px;">Twitter</span>
<span id="t57" style="left:1040.00px;top:294.00px;font-size:12px;font-weight:700;color:#ffffff;transform:scaleX(1.0378);transform-origin:0 0;-webkit-text-stroke:0.3px;">-10</span>
<span id="t58" style="left:987.80px;top:294.00px;font-size:12.4px;font-weight:700;color:#1c701c;transform:scaleX(1.0798);transform-origin:0 0;-webkit-text-stroke:0.3px;">-16.7%</span>
<span id="t59" style="left:255.70px;top:350.00px;font-size:11.2px;font-weight:700;color:#231f20;transform:scaleX(0.9740);transform-origin:0 0;-webkit-text-stroke:0.3px;">Page &amp; profile impressions</span>
<span id="t60" style="left:301.50px;top:437.00px;font-size:35px;font-weight:700;color:#14295a;transform:scaleX(1.0958);transform-origin:0 0;-webkit-text-stroke:0.3px;">436</span>
<span id="t61" style="left:299.50px;top:477.00px;font-size:11.4px;font-weight:700;color:#4a4a54;transform:scaleX(1.0133);transform-origin:0 0;-webkit-text-stroke:0.3px;">impressions</span>
<span id="t62" style="left:299.05px;top:520.00px;font-size:12.4px;font-weight:700;color:#c20e1f;transform:scaleX(1.1327);transform-origin:0 0;-webkit-text-stroke:0.3px;">2.7%</span>
<span id="t63" style="left:334.05px;top:520.00px;font-size:12px;font-weight:700;color:#4a4a54;transform:scaleX(0.9823);transform-origin:0 0;-webkit-text-stroke:0.3px;">from</span>
<span id="t64" style="left:363.65px;top:520.00px;font-size:12px;font-weight:700;color:#a48bc8;transform:scaleX(1.0833);transform-origin:0 0;-webkit-text-stroke:0.3px;">448</span>
<span id="t65" style="left:469.60px;top:350.00px;font-size:11.2px;font-weight:700;color:#231f20;transform:scaleX(0.9840);transform-origin:0 0;-webkit-text-stroke:0.3px;">Page &amp; profile impressions &gt; S...</span>
<span id="t66" style="left:458.00px;top:410.00px;font-size:12px;font-weight:400;color:#373538;transform:scaleX(0.9338);transform-origin:0 0;-webkit-text-stroke:0.2px;">Facebook Page</span>
<span id="t67" style="left:609.70px;top:410.00px;font-size:12px;font-weight:700;color:#ffffff;transform:scaleX(1.0733);transform-origin:0 0;-webkit-text-stroke:0.3px;">436</span>
<span id="t68" style="left:569.30px;top:410.00px;font-size:12.4px;font-weight:700;color:#c20e1f;transform:scaleX(1.0796);transform-origin:0 0;-webkit-text-stroke:0.3px;">2.7%</span>
<span id="t69" style="left:458.00px;top:504.00px;font-size:12px;font-weight:400;color:#373538;transform:scaleX(0.9659);transform-origin:0 0;-webkit-text-stroke:0.2px;">Instagram Business</span>
<span id="t70" style="left:624.45px;top:504.00px;font-size:12px;font-weight:700;color:#ffffff;transform:scaleX(0.9720);transform-origin:0 0;-webkit-text-stroke:0.3px;">0</span>
<span id="t71" style="left:594.80px;top:504.00px;font-size:12.4px;font-weight:700;color:#1f1f25;transform:scaleX(1.0881);transform-origin:0 0;-webkit-text-stroke:0.3px;">0%</span>
<span id="t72" style="left:683.10px;top:350.00px;font-size:11.2px;font-weight:700;color:#231f20;transform:scaleX(0.9705);transform-origin:0 0;-webkit-text-stroke:0.3px;">Page &amp; profile reach</span>
<span id="t73" style="left:729.20px;top:437.00px;font-size:35px;font-weight:700;color:#14295a;transform:scaleX(1.0855);transform-origin:0 0;-webkit-text-stroke:0.3px;">343</span>
<span id="t74" style="left:746.30px;top:477.00px;font-size:11.4px;font-weight:700;color:#4a4a54;transform:scaleX(0.9603);transform-origin:0 0;-webkit-text-stroke:0.3px;">users</span>
<span id="t75" style="left:726.40px;top:520.00px;font-size:12.4px;font-weight:700;color:#c20e1f;transform:scaleX(1.1080);transform-origin:0 0;-webkit-text-stroke:0.3px;">8.8%</span>
<span id="t76" style="left:760.70px;top:520.00px;font-size:12px;font-weight:700;color:#4a4a54;transform:scaleX(0.9823);transform-origin:0 0;-webkit-text-stroke:0.3px;">from</span>
<span id="t77" style="left:790.30px;top:520.00px;font-size:12px;font-weight:700;color:#a48bc8;transform:scaleX(1.1232);transform-origin:0 0;-webkit-text-stroke:0.3px;">376</span>
<span id="t78" style="left:896.30px;top:350.00px;font-size:11.2px;font-weight:700;color:#231f20;transform:scaleX(0.9800);transform-origin:0 0;-webkit-text-stroke:0.3px;">Page &amp; profile reach &gt; Social n...</span>
<span id="t79" style="left:884.70px;top:410.00px;font-size:12px;font-weight:400;color:#373538;transform:scaleX(0.9338);transform-origin:0 0;-webkit-text-stroke:0.2px;">Facebook Page</span>
<span id="t80" style="left:1036.45px;top:410.00px;font-size:12px;font-weight:700;color:#ffffff;transform:scaleX(1.0733);transform-origin:0 0;-webkit-text-stroke:0.3px;">343</span>
<span id="t81" style="left:996.60px;top:410.00px;font-size:12.4px;font-weight:700;color:#c20e1f;transform:scaleX(1.0619);transform-origin:0 0;-webkit-text-stroke:0.3px;">8.8%</span>
<span id="t82" style="left:884.70px;top:504.00px;font-size:12px;font-weight:400;color:#373538;transform:scaleX(0.9659);transform-origin:0 0;-webkit-text-stroke:0.2px;">Instagram Business</span>
<span id="t83" style="left:1051.45px;top:504.00px;font-size:12px;font-weight:700;color:#ffffff;transform:scaleX(0.9720);transform-origin:0 0;-webkit-text-stroke:0.3px;">0</span>
<span id="t84" style="left:1022.10px;top:504.00px;font-size:12.4px;font-weight:700;color:#1f1f25;transform:scaleX(1.0881);transform-origin:0 0;-webkit-text-stroke:0.3px;">0%</span>
</div></body></html>
